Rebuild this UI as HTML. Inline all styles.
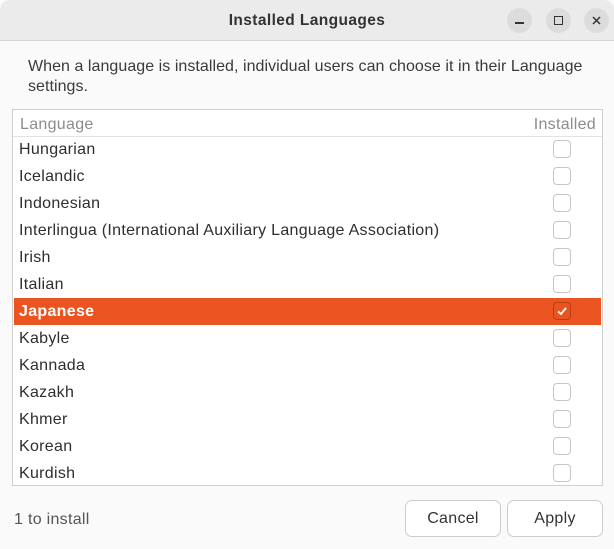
<!DOCTYPE html>
<html><head><style>
*{margin:0;padding:0;box-sizing:border-box}
body{width:614px;height:549px;background:#fafafa;font-family:"Liberation Sans","DejaVu Sans",sans-serif;color:#2e2e2e;position:relative;overflow:hidden;font-size:16px;letter-spacing:0.3px}
.tb{position:absolute;left:0;top:0;width:614px;height:41px;background:#ebebeb;border-bottom:1px solid #d6d6d6;border-radius:10px 10px 0 0}
.title{position:absolute;top:12px;width:614px;text-align:center;font-weight:bold;font-size:15.5px;color:#333;letter-spacing:0.4px}
.c{position:absolute;top:8px;width:25px;height:25px;border-radius:50%;background:#dcdcdc}
.desc{position:absolute;left:28px;top:57px;font-size:16px;line-height:20px;color:#3a3a3a;width:580px;letter-spacing:0.05px}
.box{position:absolute;left:12px;top:109px;width:591px;height:377px;border:1px solid #cfcfcf;background:#fff}
.hd{position:absolute;left:0;top:0;width:589px;height:27px;border-bottom:1px solid #e3e3e3;color:#8c8c8c}
.row{position:absolute;left:1px;width:587px;height:27px;line-height:28px;padding-left:5px}
.cb{position:absolute;left:539px;top:4px;width:18px;height:18px;border:1px solid #c6c6c6;border-radius:4px;background:#fff}
.sel{background:#e95420;color:#fff;font-weight:bold}
.sel .cb{background:#e95420;border-color:#b83f14}
.btn{position:absolute;top:500px;width:96px;height:37px;border:1px solid #cdcdcd;border-radius:7px;background:#fff;text-align:center;line-height:36px;color:#333}
</style></head><body>
<div class="tb"><div class="title">Installed Languages</div>
<div class="c" style="left:507px"><div style="position:absolute;left:8px;top:14px;width:9px;height:1.5px;background:#333"></div></div>
<div class="c" style="left:546px"><div style="position:absolute;left:8px;top:8px;width:9px;height:9px;border:1.5px solid #333"></div></div>
<div class="c" style="left:584px"><svg width="25" height="25" style="position:absolute;left:0;top:0"><path d="M9 9L16 16M16 9L9 16" stroke="#333" stroke-width="1.5"/></svg></div>
</div>
<div class="desc">When a language is installed, individual users can choose it in their Language settings.</div>
<div class="box">
<div class="hd"><span style="position:absolute;left:7px;top:6px">Language</span><span style="position:absolute;right:6px;top:6px">Installed</span></div>
<div class="row" style="top:26px">Hungarian<div class="cb"></div></div>
<div class="row" style="top:53px">Icelandic<div class="cb"></div></div>
<div class="row" style="top:80px">Indonesian<div class="cb"></div></div>
<div class="row" style="top:107px">Interlingua (International Auxiliary Language Association)<div class="cb"></div></div>
<div class="row" style="top:134px">Irish<div class="cb"></div></div>
<div class="row" style="top:161px">Italian<div class="cb"></div></div>
<div class="row sel" style="top:188px">Japanese<div class="cb"><svg width="16" height="16" style="position:absolute;left:0;top:0"><path d="M4 8.5L7 11L12 5" stroke="#fff" stroke-width="1.8" fill="none"/></svg></div></div>
<div class="row" style="top:215px">Kabyle<div class="cb"></div></div>
<div class="row" style="top:242px">Kannada<div class="cb"></div></div>
<div class="row" style="top:269px">Kazakh<div class="cb"></div></div>
<div class="row" style="top:296px">Khmer<div class="cb"></div></div>
<div class="row" style="top:323px">Korean<div class="cb"></div></div>
<div class="row" style="top:350px">Kurdish<div class="cb"></div></div>
</div>
<div style="position:absolute;left:14px;top:511px;color:#555">1 to install</div>
<div class="btn" style="left:405px">Cancel</div>
<div class="btn" style="left:507px">Apply</div>
</body></html>
